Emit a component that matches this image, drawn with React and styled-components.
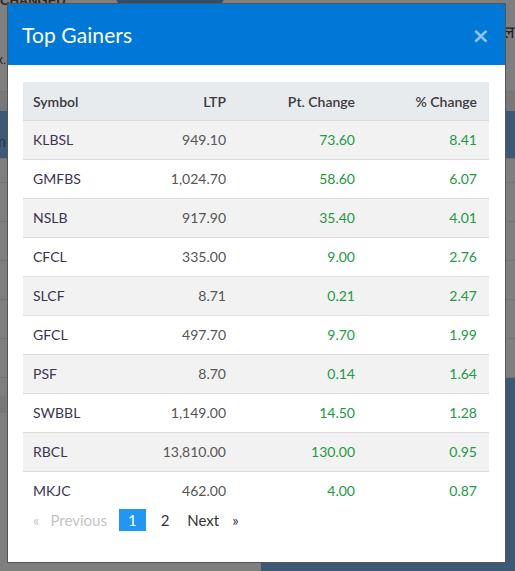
import React from "react";
import styled, { createGlobalStyle } from "styled-components";

const Global = createGlobalStyle`
  html, body { margin: 0; padding: 0; }
  body {
    width: 515px; height: 571px; overflow: hidden;
    background: #7f7f7f;
    font-family: "Source Sans Pro", Lato, "Noto Sans", sans-serif;
  }
`;

/* ---------- dimmed page behind the modal ---------- */
const Page = styled.div`
  position: relative;
  width: 515px;
  height: 571px;
  background: #7f7f7f;
  display: flex;
  flex-direction: column;
`;
const PageTop = styled.div`
  height: 8px;
  flex: none;
  display: flex;
  overflow: hidden;
`;
const Changed = styled.span`
  font: 700 13px "Liberation Sans", sans-serif;
  color: #2a2a2a;
  line-height: 13px;
  margin-top: -6px;
`;
const Pill = styled.div`
  width: 108px;
  height: 14px;
  margin: -7px 0 0 50px;
  border-radius: 0 0 10px 10px;
  background: #2f4f6e;
`;
const BgRow = styled.div`
  height: ${(p) => p.$h}px;
  flex: none;
  border-bottom: 1px solid ${(p) => (p.$line ? "#747474" : "transparent")};
  background: ${(p) => p.$bg || "transparent"};
  display: flex;
  align-items: ${(p) => p.$items || "center"};
  justify-content: space-between;
  color: #1c1c1c;
  font: 12px "Liberation Sans", sans-serif;
`;
const BgText = styled.span`
  color: ${(p) => p.$color || "#1c1c1c"};
  font-size: ${(p) => p.$size || 12}px;
  margin-left: ${(p) => p.$ml || 0}px;
  margin-top: ${(p) => p.$mt || 0}px;
`;
const BgFill = styled.div`
  flex: 1;
  display: grid;
  grid-template-columns: 261px 1fr;
`;
const BgCol = styled.div`
  display: flex;
  flex-direction: column;
  background: ${(p) => p.$bg};
`;
const BgBand = styled.div`
  height: ${(p) => p.$h}px;
  margin-top: ${(p) => p.$mt || 0}px;
  background: ${(p) => p.$bg};
`;

/* ---------- modal ---------- */
const Modal = styled.div`
  position: absolute;
  left: 7px;
  top: 3px;
  width: 497px;
  height: 558px;
  background: #fff;
  border: 1px solid #555;
  display: flex;
  flex-direction: column;
`;
const Header = styled.div`
  height: 61px;
  flex: none;
  background: #0078d7;
  display: flex;
  align-items: center;
  justify-content: space-between;
  padding: 0 15px 0 14px;
`;
const Title = styled.h4`
  margin: 0;
  color: #fff;
  font-size: 21px;
  font-weight: 400;
  letter-spacing: 0.1px;
`;
const Close = styled.span`
  color: #8fc3ee;
  font: 700 22px "DejaVu Sans", sans-serif;
  line-height: 1;
  margin-top: 2px;
`;
const Body = styled.div`
  padding: 17px 15px 0 15px;
`;
const Table = styled.table`
  width: 466px;
  border-collapse: collapse;
  font-size: 14px;
  table-layout: fixed;
`;
const Th = styled.th`
  height: 38px;
  padding: 0 ${(p) => p.$pr || 10}px 0 10px;
  text-align: ${(p) => p.$align || "left"};
  background: #e8ebee;
  color: #3a3a3a;
  font-weight: 600;
  border-bottom: 1px solid #dcdcdc;
`;
const Tr = styled.tr`
  background: ${(p) => (p.$odd ? "#f2f2f2" : "#fff")};
`;
const Td = styled.td`
  height: 38px;
  padding: 0 ${(p) => p.$pr || 10}px 0 10px;
  text-align: ${(p) => p.$align || "left"};
  color: ${(p) => p.$color || "#555"};
  border-top: 1px solid #dedede;
  line-height: 1;
`;
const Pager = styled.div`
  display: flex;
  align-items: center;
  height: 22px;
  margin-top: -1px;
  padding-left: 10px;
  font-size: 15px;
`;
const PageLink = styled.span`
  display: inline-flex;
  align-items: center;
  justify-content: center;
  height: 22px;
  margin-left: ${(p) => p.$ml || 0}px;
  padding: 0 ${(p) => (p.$active ? 9 : 0)}px;
  color: ${(p) => (p.$active ? "#fff" : p.$muted ? "#c4c4c4" : "#333")};
  background: ${(p) => (p.$active ? "#2196f3" : "transparent")};
`;

const rows = [
  ["KLBSL", "949.10", "73.60", "8.41"],
  ["GMFBS", "1,024.70", "58.60", "6.07"],
  ["NSLB", "917.90", "35.40", "4.01"],
  ["CFCL", "335.00", "9.00", "2.76"],
  ["SLCF", "8.71", "0.21", "2.47"],
  ["GFCL", "497.70", "9.70", "1.99"],
  ["PSF", "8.70", "0.14", "1.64"],
  ["SWBBL", "1,149.00", "14.50", "1.28"],
  ["RBCL", "13,810.00", "130.00", "0.95"],
  ["MKJC", "462.00", "4.00", "0.87"],
];

const GREEN = "#219a42";

export default function App() {
  return (
    <>
      <Global />
      <Page>
        <PageTop>
          <Changed>CHANGED</Changed>
          <Pill />
        </PageTop>
        <BgRow $h={42} $items="flex-start">
          <span />
          <BgText $size={17} $mt={12}>ल</BgText>
        </BgRow>
        <BgRow $h={40} $line $items="flex-start">
          <BgText $ml={-3} $mt={2}>x.</BgText>
        </BgRow>
        <BgRow $h={18} $bg="#787878" />
        <BgRow $h={47} $bg="#3c5a75" $line>
          <BgText $color="#1f3347" $size={14} $ml={-2} $mt={14}>n</BgText>
        </BgRow>
        <BgRow $h={23} $line />
        <BgRow $h={38} $line />
        <BgRow $h={38} $line />
        <BgRow $h={38} $line />
        <BgRow $h={38} $line />
        <BgRow $h={38} $line />
        <BgFill>
          <BgCol $bg="#7f7f7f">
            <BgBand $h={17} $mt={18} $bg="#787878" />
          </BgCol>
          <BgCol $bg="#3c5a75" />
        </BgFill>

        <Modal>
          <Header>
            <Title>Top Gainers</Title>
            <Close>×</Close>
          </Header>
          <Body>
            <Table>
              <colgroup>
                <col style={{ width: 110 }} />
                <col style={{ width: 103 }} />
                <col style={{ width: 129 }} />
                <col style={{ width: 124 }} />
              </colgroup>
              <thead>
                <tr>
                  <Th>Symbol</Th>
                  <Th $align="right">LTP</Th>
                  <Th $align="right">Pt. Change</Th>
                  <Th $align="right" $pr={12}>% Change</Th>
                </tr>
              </thead>
              <tbody>
                {rows.map((r, i) => (
                  <Tr key={r[0]} $odd={i % 2 === 0}>
                    <Td $color="#3b3450">{r[0]}</Td>
                    <Td $align="right">{r[1]}</Td>
                    <Td $align="right" $color={GREEN}>{r[2]}</Td>
                    <Td $align="right" $pr={12} $color={GREEN}>{r[3]}</Td>
                  </Tr>
                ))}
              </tbody>
            </Table>
            <Pager>
              <PageLink $muted>«</PageLink>
              <PageLink $muted $ml={11}>Previous</PageLink>
              <PageLink $active $ml={12}>1</PageLink>
              <PageLink $ml={15}>2</PageLink>
              <PageLink $ml={18}>Next</PageLink>
              <PageLink $ml={13}>»</PageLink>
            </Pager>
          </Body>
        </Modal>
      </Page>
    </>
  );
}
